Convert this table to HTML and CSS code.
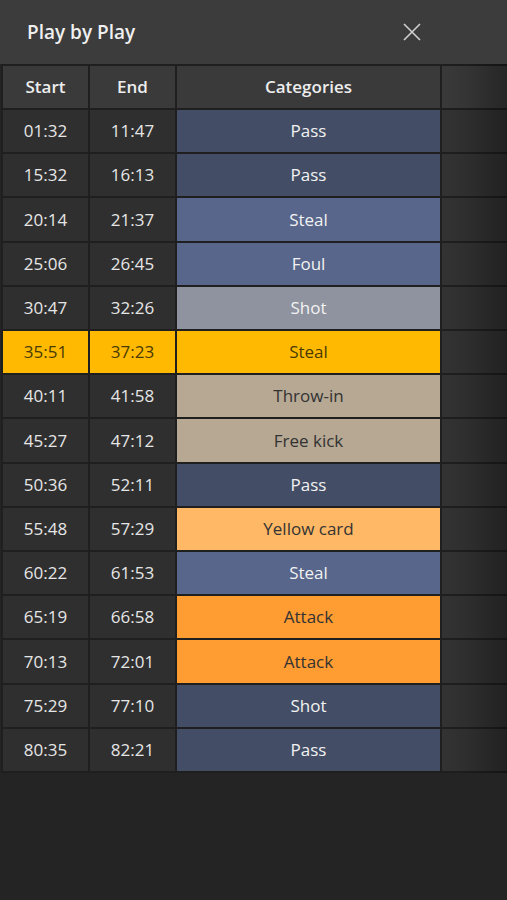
FILE: index.html
```html
<!DOCTYPE html>
<html lang="en">
<head>
<meta charset="utf-8">
<title>Play by Play</title>
<link rel="stylesheet" href="styles.css">
</head>
<body>
<div class="app">
  <header class="topbar">
    <h1 class="title">Play by Play</h1>
    <button class="close" aria-label="Close">
      <svg width="18" height="18" viewBox="0 0 18 18"><path d="M1 1 L17 17 M17 1 L1 17" stroke="#d0d0d0" stroke-width="1.6" fill="none"/></svg>
    </button>
  </header>
  <div class="table-wrap">
    <div class="grid">
      <div class="hcell">Start</div><div class="hcell">End</div><div class="hcell">Categories</div><div class="hcell extra"></div>

      <div class="cell">01:32</div><div class="cell">11:47</div><div class="cat pass">Pass</div><div class="cell extra"></div>
      <div class="cell">15:32</div><div class="cell">16:13</div><div class="cat pass">Pass</div><div class="cell extra"></div>
      <div class="cell">20:14</div><div class="cell">21:37</div><div class="cat steal">Steal</div><div class="cell extra"></div>
      <div class="cell">25:06</div><div class="cell">26:45</div><div class="cat steal">Foul</div><div class="cell extra"></div>
      <div class="cell">30:47</div><div class="cell">32:26</div><div class="cat shot">Shot</div><div class="cell extra"></div>
      <div class="cell hl">35:51</div><div class="cell hl">37:23</div><div class="cat hl">Steal</div><div class="cell extra"></div>
      <div class="cell">40:11</div><div class="cell">41:58</div><div class="cat beige">Throw-in</div><div class="cell extra"></div>
      <div class="cell">45:27</div><div class="cell">47:12</div><div class="cat beige">Free kick</div><div class="cell extra"></div>
      <div class="cell">50:36</div><div class="cell">52:11</div><div class="cat pass">Pass</div><div class="cell extra"></div>
      <div class="cell">55:48</div><div class="cell">57:29</div><div class="cat yellow">Yellow card</div><div class="cell extra"></div>
      <div class="cell">60:22</div><div class="cell">61:53</div><div class="cat steal">Steal</div><div class="cell extra"></div>
      <div class="cell">65:19</div><div class="cell">66:58</div><div class="cat attack">Attack</div><div class="cell extra"></div>
      <div class="cell">70:13</div><div class="cell">72:01</div><div class="cat attack">Attack</div><div class="cell extra"></div>
      <div class="cell">75:29</div><div class="cell">77:10</div><div class="cat pass">Shot</div><div class="cell extra"></div>
      <div class="cell">80:35</div><div class="cell">82:21</div><div class="cat pass">Pass</div><div class="cell extra"></div>
    </div>
    <div class="fade"></div>
  </div>
</div>
</body>
</html>
```

FILE: styles.css
```css
* { box-sizing: border-box; }
html, body {
  margin: 0;
  padding: 0;
  background: #242424;
  height: 100%;
}
body {
  font-family: "Open Sans", "Noto Sans", sans-serif;
  color: #e8e8e8;
  overflow: hidden;
}
.app {
  width: 507px;
  height: 900px;
  background: #242424;
}
.topbar {
  height: 64px;
  background: #3c3c3c;
  display: flex;
  align-items: center;
  justify-content: space-between;
  padding: 0 86px 0 27px;
}
.title {
  margin: 0;
  font-size: 19px;
  font-weight: 600;
  color: #f0f0f0;
  padding-bottom: 1px;
}
.close {
  background: none;
  border: 0;
  padding: 0;
  width: 18px;
  height: 18px;
  display: flex;
  margin-bottom: 1px;
}
.table-wrap {
  position: relative;
  width: 507px;
  overflow: hidden;
}
.grid {
  display: grid;
  grid-template-columns: 85px 85px 263px 90px;
  grid-template-rows: 42px repeat(15, 42.21px);
  gap: 2px;
  padding: 2px;
  margin-left: 1px;
  width: 533px;
  background: #1f1f1f;
}
.hcell, .cell, .cat {
  display: flex;
  align-items: center;
  justify-content: center;
  font-size: 17px;
  line-height: 1;
  padding-bottom: 1px;
}
.hcell {
  background: #3a3a3a;
  font-weight: 600;
  color: #ededed;
}
.cell {
  background: #2f2f2f;
  color: #e6e6e6;
}
.cell.extra { background: #333333; }
.hcell.extra { background: #3a3a3a; }
.cat { color: #f2f2f2; }
.pass { background: #434e66; }
.steal { background: #57668a; }
.shot { background: #8f929f; }
.hl { background: #ffb900; color: #4a3a06; }
.beige { background: #b6a893; color: #333333; }
.yellow { background: #ffb865; color: #333333; }
.attack { background: #ff9c32; color: #333333; }
.fade {
  position: absolute;
  top: 0;
  right: 0;
  bottom: -12px;
  width: 66px;
  background: linear-gradient(to right, rgba(0,0,0,0) 0%, rgba(0,0,0,0.1) 40%, rgba(0,0,0,0.35) 100%);
  pointer-events: none;
}
```
